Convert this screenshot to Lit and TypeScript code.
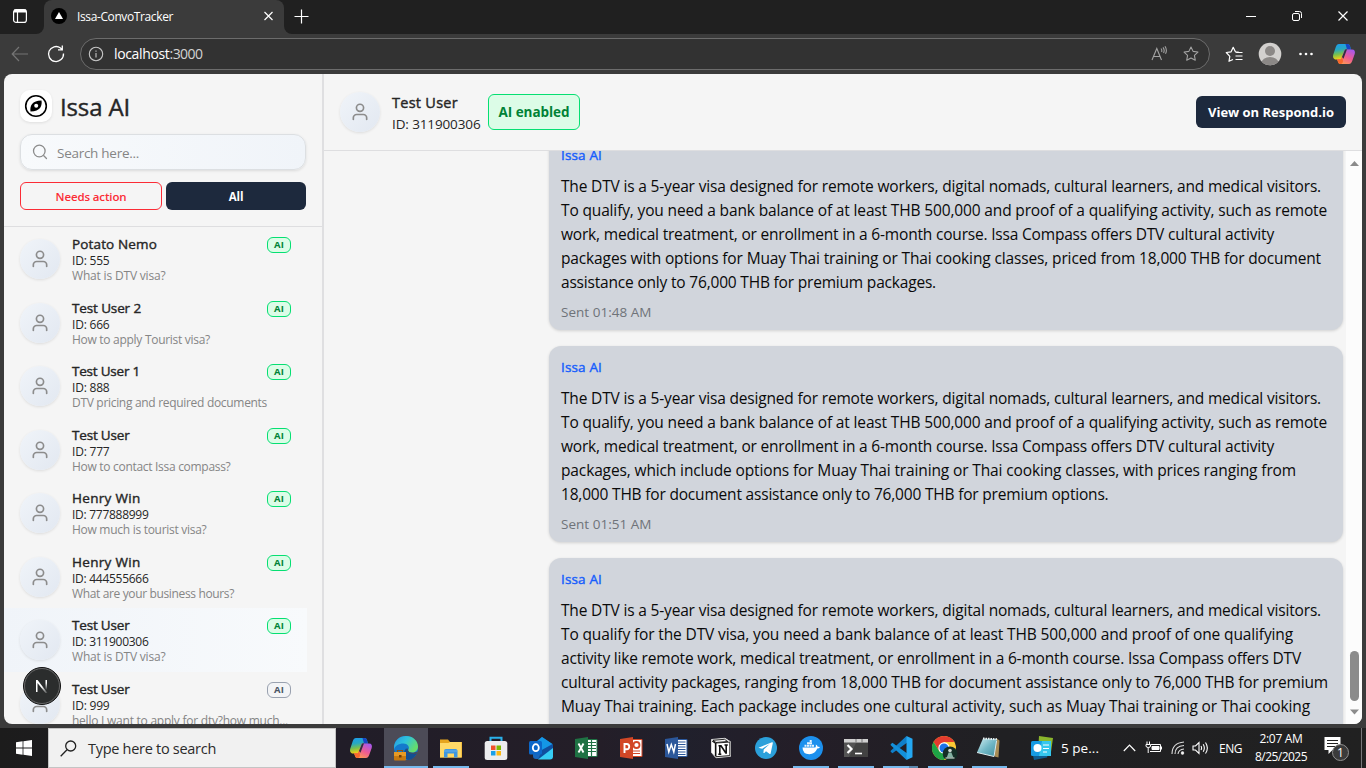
import { LitElement, html, css, nothing } from "lit";
import { customElement, property, query } from "lit/decorators.js";

/** A single line of text whose tracking is tuned to a fixed advance width. */
@customElement("fit-text")
class FitText extends LitElement {
  @property({ type: Number }) w = 0;
  @property() text = "";
  @query("span") span!: HTMLSpanElement;
  static styles = css`
    :host { display: inline-block; white-space: nowrap; }
    span { display: inline-block; white-space: pre; }
  `;
  render() { return html`<span>${this.text}</span>`; }
  updated() {
    this.span.style.letterSpacing = "0";
    const natural = this.span.getBoundingClientRect().width;
    this.span.style.letterSpacing = `${(this.w - natural) / this.text.length}px`;
  }
}

const t = (text: string, w: number, cls = "") => html`<fit-text class=${cls} .text=${text} .w=${w}></fit-text>`;

const userIcon = html`<svg width="20" height="20" viewBox="0 0 24 24" fill="none" stroke="#8c8c8c" stroke-width="2" stroke-linecap="round" stroke-linejoin="round"><circle cx="12" cy="7" r="4.3"/><path d="M20 21v-2a4 4 0 0 0-4-4H8a4 4 0 0 0-4 4v2"/></svg>`;

const copilot = html`<svg width="24" height="24" viewBox="0 0 24 24">
  <defs>
    <linearGradient id="ca" x1="0" y1="0" x2="0.2" y2="1"><stop offset="0" stop-color="#1b9cf0"/><stop offset=".4" stop-color="#28a8c0"/><stop offset=".7" stop-color="#7cc04a"/><stop offset="1" stop-color="#f3cf17"/></linearGradient>
    <linearGradient id="cb" x1=".8" y1="0" x2=".2" y2="1"><stop offset="0" stop-color="#a558ee"/><stop offset=".5" stop-color="#ef5b93"/><stop offset="1" stop-color="#ffa04d"/></linearGradient>
  </defs>
  <path d="M7 2h8.500c1.700 0 2.200 1 2.700 2.700l.8 2.800h-4.500L10 17.500H4C1.500 17.500.5 15 1.300 12.500L3.800 5C4.500 3 5.500 2 7 2z" fill="url(#ca)"/>
  <path d="M13.500 2h2c1.700 0 2.200 1 2.700 2.700l.8 2.800h-4z" fill="#1745c5"/>
  <path d="M17 22H8.500c-1.700 0-2.200-1-2.700-2.700L5 17.200h4l3.800-9.700H20c2.500 0 3.500 2 2.700 4.500L20.200 19c-.7 2-1.700 3-3.200 3z" fill="url(#cb)"/>
  <path d="M5 17.200h4l1.200-3 .8 4.500c.2 1.500-1 3.300-2.500 3.300-1.700 0-2.200-1-2.700-2.700z" fill="#f8682c"/>
  <path d="M10 15L13 7.500l2-.3-3.500 9.500z" fill="#303040"/>
</svg>`;

const star = "M10 2.200l2.350 4.900 5.350.75-3.900 3.750.95 5.300L10 14.400l-4.750 2.500.95-5.300L2.300 7.850l5.350-.75z";

const taskIcons: { id: string; w: number; on?: boolean; bar?: number; split?: boolean; art: unknown }[] = [
  { id: "copilot", w: 46, art: copilot },
  { id: "edge", w: 44, on: true, bar: 44, art: html`<svg width="26" height="26" viewBox="0 0 26 26">
    <defs><linearGradient id="eg" x1="0" y1="0" x2="1" y2=".5"><stop offset="0" stop-color="#2795e0"/><stop offset=".5" stop-color="#2ec3dd"/><stop offset="1" stop-color="#66dc6b"/></linearGradient></defs>
    <circle cx="13" cy="13" r="12" fill="#1479cc"/>
    <path d="M1 13C1 5.500 6.300 1 13 1c7 0 12 5 12 10.500 0 4-3 6-6 6-3.500 0-4.500-1.500-3.500-3 1.500-2.500-1-6-5-6C5.500 8.500 1.500 11 1 15z" fill="url(#eg)"/>
    <path d="M15 14c-1 2 1 4 4 4 2 0 3.500-.5 4.300-1L24 18c-2 4-5 7-9 7-4.500-1-5.500-8-2-11.500z" fill="#144f91"/>
    <path d="M14 13c1.500 1 .5 2 1.800 3.600 1.200 1.400 5 1.700 8.700-.2L23 19l-8-1z" fill="#4c4b57"/>
    <rect x="1" y="17" width="12" height="8.500" rx="1" fill="#c77a10"/><path d="M1 17h12v4H1z" fill="#e79a25"/><path d="M4.500 17v-1.500h5V17" fill="none" stroke="#8e5412" stroke-width="1.200"/><rect x="6" y="20" width="2.500" height="2.500" fill="#6f3d08"/>
  </svg>` },
  { id: "explorer", w: 46, bar: 36, art: html`<svg width="24" height="24" viewBox="0 0 24 24"><path d="M1 3.500h8l2 2.500h12v15.500H1z" fill="#e6a51e"/><path d="M1 7h8.500l1.500-1h11.500v15.500H1z" fill="#ffd967"/><path d="M5 21.500V15q0-2 2-2h9.500q2 0 2 2v6.500h-3.500v-4H8.500v4z" fill="#3e97e0"/><path d="M5 15h13.500" stroke="#67b2ee"/></svg>` },
  { id: "store", w: 44, art: html`<svg width="24" height="24" viewBox="0 0 24 24"><path d="M6.500 7V1.700h11V7" fill="none" stroke="#2ab1ea" stroke-width="2"/><rect x=".7" y="5" width="22.600" height="19" rx="2.500" fill="#ededef"/><path d="M7 9.500h4.500V14H7z" fill="#f0512a"/><path d="M12.500 9.500H17V14h-4.500z" fill="#7eb900"/><path d="M7 15h4.500v4.500H7z" fill="#1ba0e8"/><path d="M12.500 15H17v4.500h-4.500z" fill="#fcb813"/></svg>` },
  { id: "outlook", w: 45, art: html`<svg width="24" height="24" viewBox="0 0 24 24"><path d="M4 8l9-7 10 7v12q0 3-3 3H7q-3 0-3-3z" fill="#1768bd"/><path d="M8 5.500L13 1l10.500 7L13 14z" fill="#1497e6"/><path d="M24 8.500v12q0 3-3 3H9z" fill="#36cdf4"/><path d="M13 14l11-6v4L9 23.500z" fill="#104f9e"/><rect y="5" width="13" height="13.500" rx="1.500" fill="#0c67c8"/><ellipse cx="6.800" cy="11.700" rx="3" ry="3.500" fill="none" stroke="#fff" stroke-width="1.800"/></svg>` },
  { id: "excel", w: 45, art: html`<svg width="24" height="24" viewBox="0 0 24 24"><path d="M12 3.500h11v17H12z" fill="#fff" stroke="#1f7244" stroke-width="1"/><path d="M13 6.500h9M13 9.500h9M13 12.500h9M13 15.500h9M17.500 4v16" stroke="#1f7244" stroke-width="1.200"/><path d="M1 3L14 1v22L1 21z" fill="#1f7244"/><path d="M4.500 7.500l5 9M9.500 7.500l-5 9" stroke="#fff" stroke-width="1.900"/></svg>` },
  { id: "powerpoint", w: 45, art: html`<svg width="24" height="24" viewBox="0 0 24 24"><path d="M12 3.500h11v17H12z" fill="#fff" stroke="#d24726" stroke-width="1"/><circle cx="17.500" cy="9" r="3" fill="none" stroke="#d24726" stroke-width="1.800"/><path d="M14 15h7M14 17.500h7" stroke="#d24726" stroke-width="1.200"/><path d="M1 3L14 1v22L1 21z" fill="#d24726"/><path d="M5.500 17V8h2.300q2.400 0 2.400 2.600T7.800 13.200H5.500" fill="none" stroke="#fff" stroke-width="1.900"/></svg>` },
  { id: "word", w: 45, art: html`<svg width="24" height="24" viewBox="0 0 24 24"><path d="M12 3.500h11v17H12z" fill="#fff" stroke="#2b579a" stroke-width="1"/><path d="M13 6h8.500M13 8.500h8.500M13 11h8.500M13 13.500h8.500M13 16h8.500M13 18.500h8.500" stroke="#2b579a" stroke-width="1.100"/><path d="M1 3L14 1v22L1 21z" fill="#2b579a"/><path d="M3 8l1.800 8L7.300 8.500 9.800 16l1.700-8" fill="none" stroke="#fff" stroke-width="1.500"/></svg>` },
  { id: "notion", w: 45, art: html`<svg width="22" height="22" viewBox="0 0 22 22"><path d="M1.500 2.500L15 1.300l5.500 3.500v14.500L6 20.700 1.500 15.500z" fill="#fff" stroke="#d8d8d8" stroke-width="1"/><path d="M3 3.300L14.500 2.300l3.200 2.200L6 5.500z" fill="#f4f4f4" stroke="#111" stroke-width=".9"/><path d="M2.300 4l3.200 2.300v13" fill="none" stroke="#111" stroke-width="1.300"/><path d="M6 6l13.800-.9v13.500L6 19.700z" fill="#fff" stroke="#111" stroke-width=".9"/><path d="M8.500 8.800h2.500l5 7.500M9.800 9v8M16.200 7.800V16.800M8.300 17.200h3M14.500 8h3.300" fill="none" stroke="#111" stroke-width="1.600"/></svg>` },
  { id: "telegram", w: 45, art: html`<svg width="24" height="24" viewBox="0 0 24 24"><circle cx="12" cy="12" r="11" fill="#2ba0da"/><path d="M4.500 11.700l13.500-5.400q1-.3.800.9l-2.200 10.200q-.3 1-1.200.4l-3.400-2.500-1.700 1.600-.9.2.3-3.500 6-5.500-7.600 4.700-3-.9q-.8-.2-.6-.2z" fill="#fff"/></svg>` },
  { id: "docker", w: 45, bar: 36, art: html`<svg width="26" height="26" viewBox="0 0 26 26"><circle cx="13" cy="13" r="12" fill="#1c90ed"/><path d="M4.500 12.500h12.800q1-1 .5-3 1.700.8 1.900 2.300 1.300-.3 2.300.2-.7 1.600-2.700 1.600-2.300 5.600-8 5.600-6.600 0-6.800-6.700z" fill="#fff"/><path d="M6.500 9.700h2v2h-2zM9 9.700h2v2H9zM11.500 9.700h2v2h-2zM14 9.700h2v2h-2zM9 7.300h5v2H9zM11.700 5h2v2h-2z" fill="#e6f3fe"/></svg>` },
  { id: "terminal", w: 45, bar: 36, art: html`<svg width="26" height="24" viewBox="0 0 26 24"><rect x="1" y="3" width="24" height="18" fill="#545454"/><path d="M13 7h12v14H6z" fill="#424242"/><path d="M1 3h24v3.500H1z" fill="#d0d0d0"/><path d="M13 3v3.500M19 3v3.500" stroke="#777"/><path d="M4.500 9l4 4-4 4" fill="none" stroke="#fff" stroke-width="2.200"/><path d="M12 17.500h7" stroke="#fff" stroke-width="1.600"/></svg>` },
  { id: "vscode", w: 45, bar: 35, split: true, art: html`<svg width="26" height="26" viewBox="0 0 26 26"><path d="M18.500 1L3 15.500q-1 .8 0 1.600l1.400 1.200L20 7z" fill="#0f7fc9"/><path d="M18.500 25L3 10.500q-1-.8 0-1.600l1.400-1.200L20 19z" fill="#1390da"/><path d="M18.500 1l6 2.700v18.600l-6 2.700z" fill="#24a8f2"/></svg>` },
  { id: "chrome", w: 44, bar: 35, art: html`<svg width="26" height="26" viewBox="0 0 26 26"><circle cx="12" cy="13" r="12" fill="#fcc934"/><path d="M1.600 7A12 12 0 0 1 22.400 7H12L7 15.500z" fill="#e33b2e"/><path d="M1.600 7A12 12 0 0 0 12 25l5-9-9.500.5z" fill="#1ea446"/><circle cx="12" cy="13" r="5.700" fill="#fff"/><circle cx="12" cy="13" r="4.500" fill="#1b73e8"/><circle cx="18" cy="18.700" r="7.300" fill="#142e26"/><circle cx="18" cy="15.500" r="1.800" fill="#cfd9d3"/><path d="M14.800 22.500l1.800-5h2.800l2 5z" fill="#83b2a2"/><path d="M13.500 23h9" stroke="#e5eee8"/></svg>` },
  { id: "notepad", w: 44, bar: 35, art: html`<svg width="26" height="26" viewBox="0 0 26 26"><defs><linearGradient id="np" x1="0" y1="0" x2="1" y2="1"><stop offset="0" stop-color="#d3eff2"/><stop offset=".5" stop-color="#72b8c6"/><stop offset="1" stop-color="#3f8e9f"/></linearGradient></defs><path d="M20 3l3.500 2.500-1 17-4-1z" fill="#a88c55"/><path d="M7 3.500L21 4l-3 17.500L1 17.500z" fill="url(#np)"/><path d="M7 3.500l14 .8" stroke="#e9eff0" stroke-width="2" stroke-dasharray="1.500 1"/><path d="M1 17.500l17 4L20.500 6" fill="none" stroke="#dcebed"/></svg>` },
];

interface Person { name: string; nw: number; id: string; iw: number; msg: string; mw: number; ai: boolean; sel?: boolean }
const people: Person[] = [
  { name: "Potato Nemo", nw: 85, id: "ID: 555", iw: 37.5, msg: "What is DTV visa?", mw: 93.5, ai: true },
  { name: "Test User 2", nw: 69, id: "ID: 666", iw: 37.5, msg: "How to apply Tourist visa?", mw: 138, ai: true },
  { name: "Test User 1", nw: 68, id: "ID: 888", iw: 37.5, msg: "DTV pricing and required documents", mw: 195, ai: true },
  { name: "Test User", nw: 57.5, id: "ID: 777", iw: 37.5, msg: "How to contact Issa compass?", mw: 158.5, ai: true },
  { name: "Henry Win", nw: 68.5, id: "ID: 777888999", iw: 76.5, msg: "How much is tourist visa?", mw: 134.5, ai: true },
  { name: "Henry Win", nw: 68.5, id: "ID: 444555666", iw: 76.5, msg: "What are your business hours?", mw: 162, ai: true },
  { name: "Test User", nw: 57.5, id: "ID: 311900306", iw: 76.5, msg: "What is DTV visa?", mw: 93.5, ai: true, sel: true },
  { name: "Test User", nw: 57.5, id: "ID: 999", iw: 37.5, msg: "hello I want to apply for dtv?how much...", mw: 216, ai: false },
];

const messages: { lines: [string, number][]; sent?: string }[] = [
  { lines: [
    ["The DTV is a 5-year visa designed for remote workers, digital nomads, cultural learners, and medical visitors.", 760],
    ["To qualify, you need a bank balance of at least THB 500,000 and proof of a qualifying activity, such as remote", 766],
    ["work, medical treatment, or enrollment in a 6-month course. Issa Compass offers DTV cultural activity", 713],
    ["packages with options for Muay Thai training or Thai cooking classes, priced from 18,000 THB for document", 760],
    ["assistance only to 76,000 THB for premium packages.", 375],
  ], sent: "Sent 01:48 AM" },
  { lines: [
    ["The DTV is a 5-year visa designed for remote workers, digital nomads, cultural learners, and medical visitors.", 760],
    ["To qualify, you need a bank balance of at least THB 500,000 and proof of a qualifying activity, such as remote", 766],
    ["work, medical treatment, or enrollment in a 6-month course. Issa Compass offers DTV cultural activity", 713],
    ["packages, which include options for Muay Thai training or Thai cooking classes, with prices ranging from", 735],
    ["18,000 THB for document assistance only to 76,000 THB for premium options.", 547.5],
  ], sent: "Sent 01:51 AM" },
  { lines: [
    ["The DTV is a 5-year visa designed for remote workers, digital nomads, cultural learners, and medical visitors.", 760],
    ["To qualify for the DTV visa, you need a bank balance of at least THB 500,000 and proof of one qualifying", 732],
    ["activity like remote work, medical treatment, or enrollment in a 6-month course. Issa Compass offers DTV", 740],
    ["cultural activity packages, ranging from 18,000 THB for document assistance only to 76,000 THB for premium", 767],
    ["Muay Thai training. Each package includes one cultural activity, such as Muay Thai training or Thai cooking", 749],
  ] },
];

@customElement("app-root")
class AppRoot extends LitElement {
  static styles = css`
    :host { display: flex; flex-direction: column; width: 1366px; height: 768px; overflow: hidden; background: #3b3b3b; font-family: "Open Sans", sans-serif; color: #262626; }
    * { box-sizing: border-box; }
    svg { display: block; flex: none; }
    .tabs { height: 34px; background: #202020; display: flex; align-items: center; color: #fff; font-size: 12px; flex: none; }
    .tabs .menu { width: 44px; height: 34px; padding: 8px 0 0 12px; border-radius: 0 0 8px 0; background: #202020; }
    .strip { display: flex; background: #3b3b3b; height: 34px; }
    .tab { width: 240px; height: 34px; background: #3b3b3b; border-radius: 8px 8px 0 0; display: flex; align-items: center; padding: 0 9px 2px 7px; gap: 10px; }
    .tab .x { margin-left: auto; }
    .newtab { flex: 1; height: 34px; background: #202020; border-radius: 0 0 0 8px; display: flex; align-items: center; padding: 0 17px 2px 10px; }
    .corner { background: linear-gradient(to bottom, #202020 50%, #3b3b3b 50%); flex: 1; display: flex; }
    .corner.left { flex: none; }
    .controls { margin-left: auto; display: flex; gap: 34px; align-items: center; }
    .bar { height: 40px; display: flex; align-items: center; padding: 0 10px 0 11px; flex: none; }
    .reload { margin-left: 17px; }
    .url { height: 32px; width: 1130px; margin-left: 14px; border: 1px solid #6c6c6c; border-radius: 16px; background: #323232; display: flex; align-items: center; padding: 0 9px 0 7px; color: #fff; font-size: 14px; }
    .url fit-text { margin: -1px 0 0 10px; }
    .port { color: #d2d2d2; }
    .url .port { margin-left: 0; }
    .url .read { margin-left: auto; margin-right: 14px; }
    .tools { display: flex; align-items: center; gap: 13px; margin-left: 14px; }
    .favs { margin-right: 1px; }
    .dots { margin: 0 2px; }
    .page { height: 650px; width: 1358px; margin: 0 4px; border-radius: 8px; overflow: hidden; background: #f5f5f5; display: flex; flex: none; }
    .side { width: 320px; border-right: 2px solid #dfdfe1; display: flex; flex-direction: column; flex: none; overflow: hidden; }
    .head { height: 153px; border-bottom: 1px solid #dedee0; padding: 16px 16px 0; flex: none; }
    .brand { display: flex; align-items: center; gap: 8px; height: 32px; font-size: 24px; line-height: 32px; }
    .brand fit-text { padding-top: 2px; -webkit-text-stroke: 0.400px; }
    .logo { width: 32px; height: 32px; border-radius: 10px; background: #fff; box-shadow: 0 1px 3px #00000018; display: grid; place-items: center; }
    .search { margin-top: 12px; width: 286px; height: 36px; border-radius: 12px; border: 1px solid #dcdfe2; background: linear-gradient(90deg, #f8fafc, #f0f4f9); box-shadow: 0 1px 3px #0000001c; display: flex; align-items: center; padding: 0 11px; gap: 9px; font-size: 13.500px; color: #858585; }
    .search fit-text { padding-top: 1px; }
    .filters { display: flex; gap: 4px; margin-top: 12px; font-size: 11.500px; font-weight: 600; }
    .filters div { height: 28px; border-radius: 6px; display: grid; place-items: center; padding-top: 1px; }
    .need { width: 142px; border: 1px solid #fb2c36; color: #fb2c36; }
    .all { width: 140px; background: #1d293d; color: #fff; font-weight: 700; }
    .row { height: 63.500px; width: 303px; display: flex; padding: 0 16px; flex: none; }
    .row.sel { background: linear-gradient(90deg, #f0f4f9, #f8fafc); }
    .ava { width: 40px; height: 40px; border-radius: 50%; background: linear-gradient(135deg, #f0f4f9, #e2e8f1); box-shadow: 0 1px 3px #0000001a; display: grid; place-items: center; flex: none; }
    .row .ava { margin-top: 12px; }
    .info { margin-left: 12px; width: 195px; flex: none; display: flex; flex-direction: column; padding-top: 7px; }
    .name { font-size: 13.500px; line-height: 21px; height: 19px; -webkit-text-stroke: 0.400px; }
    .uid { font-size: 12px; line-height: 15px; height: 15px; }
    .msg { font-size: 12px; line-height: 16px; height: 16px; color: #858585; }
    .pill { width: 24px; height: 16px; border-radius: 6px; border: 1px solid #05df72; background: #dcfce7; color: #008236; font-size: 9.500px; font-weight: 700; display: grid; place-items: center; line-height: 14px; margin-top: 10px; flex: none; }
    .pill.off { border-color: #99a1af; background: #f3f4f6; color: #4a5565; }
    .badge { position: absolute; left: 22px; top: 666px; }
    .main { flex: 1; display: flex; flex-direction: column; min-width: 0; }
    .top { height: 77px; border-bottom: 1px solid #dedee0; display: flex; align-items: center; padding: 0 16px; flex: none; }
    .who { margin-left: 12px; display: flex; flex-direction: column; width: 88px; padding-top: 3px; }
    .who .n { font-size: 14.500px; line-height: 20px; height: 20px; -webkit-text-stroke: 0.400px; }
    .who .i { font-size: 13.500px; line-height: 22px; height: 22px; }
    .enabled { margin-left: 8px; width: 92px; height: 36px; border: 1px solid #05df72; border-radius: 6px; background: #dcfce7; color: #008236; font-size: 13.500px; font-weight: 700; display: grid; place-items: center; }
    .view { margin-left: auto; width: 150px; height: 32px; border-radius: 6px; background: #1d293d; color: #fff; font-size: 13px; font-weight: 700; display: grid; place-items: center; }
    .body { flex: 1; display: flex; min-height: 0; }
    .chat { flex: 1; overflow: hidden; display: flex; flex-direction: column; align-items: flex-end; gap: 16px; padding-right: 3px; }
    .scrolled { margin-top: -17px; }
    .bubble { width: 794px; border-radius: 12px; background: #d1d5dc; box-shadow: 0 1px 3px #00000026; padding: 11px 12px 8px; flex: none; }
    .from { font-size: 13.500px; -webkit-text-stroke: 0.400px; color: #155dfc; line-height: 20px; height: 20px; }
    .lines { margin-top: 9px; font-size: 15.500px; line-height: 24px; color: #0a0a0a; }
    .lines div { height: 24px; }
    .sent { margin-top: 8px; height: 20px; font-size: 13.500px; line-height: 20px; color: #6f7379; }
    .scroll { width: 16px; background: #fcfcfc; display: flex; flex-direction: column; align-items: center; flex: none; padding: 8px 0 9px 1px; }
    .thumb { width: 9px; height: 50px; border-radius: 5px; background: #8b8b8b; margin-top: auto; margin-bottom: 8px; }
    .task { height: 40px; margin-top: 4px; background: linear-gradient(90deg, #1c1c1c 0, #211d28 340px, #241e28 600px, #20202c 680px, #241e28 800px, #202023 1000px, #212121 1366px); display: flex; flex: none; color: #fff; }
    .start { width: 48px; display: grid; place-items: center; }
    .find { width: 288px; background: #f1f1f1; border: 1px solid #c4c4c4; display: flex; align-items: center; gap: 11px; padding-left: 11px; color: #2b2b2b; font-size: 14.500px; }
    .apps { display: flex; margin-left: 2px; }
    .app { height: 40px; display: flex; flex-direction: column; align-items: center; justify-content: space-between; }
    .app .art { height: 38px; display: grid; place-items: center; padding-top: 2px; }
    .app.on { background: #4c4b57; }
    .line { height: 2px; background: #76b9ed; }
    .line.split { background: linear-gradient(90deg, #76b9ed 26px, #5a88ae 26px); }
    .tray { margin-left: auto; display: flex; align-items: center; }
    .news { font-size: 13.500px; margin-left: 7px; }
    .tray .up { margin-left: 24px; }
    .tray .bat { margin-left: 9px; }
    .tray .wifi { margin-left: 9px; }
    .tray .vol { margin-left: 7px; }
    .eng { font-size: 12px; margin-left: 10px; }
    .clock { display: flex; flex-direction: column; align-items: center; width: 54px; margin-left: 12px; font-size: 12px; line-height: 18px; }
    .clock fit-text { height: 18px; }
    .note { margin-left: 16px; }
    .peek { width: 1px; height: 40px; background: #77777a; margin: 0 4px 0 11px; }
  `;

  render() {
    return html`
      <div class="tabs">
        <div class="corner left"><div class="menu">
          <svg width="16" height="16" viewBox="0 0 16 16" fill="none" stroke="#fff" stroke-width="1.200"><rect x="1.600" y="1.600" width="12.800" height="12.800" rx="2.500"/><path d="M2 3h12" stroke-width="3"/><path d="M5.500 4v10"/></svg>
        </div></div>
        <div class="strip"><div class="corner"><div class="tab">
          <svg width="16" height="16" viewBox="0 0 16 16"><circle cx="8" cy="8" r="8" fill="#000"/><path d="M8 4l4 7H4z" fill="#fff"/></svg>
          ${t("Issa-ConvoTracker", 96)}
          <svg class="x" width="12" height="12" viewBox="0 0 12 12" stroke="#fff" stroke-width="1.200"><path d="M1.500 2l8 8M9.500 2l-8 8"/></svg>
        </div></div></div>
        <div class="corner"><div class="newtab">
          <svg width="15" height="15" viewBox="0 0 15 15" stroke="#fff" stroke-width="1.200"><path d="M7.500 .5v14M.5 7.500h14"/></svg>
          <div class="controls">
            <svg width="12" height="12" viewBox="0 0 12 12"><path d="M1 6.500h10" stroke="#fff"/></svg>
            <svg width="12" height="12" viewBox="0 0 12 12" fill="none" stroke="#fff"><rect x="1.500" y="3.500" width="7" height="7" rx="1.500"/><path d="M4 1.500h4.500a2 2 0 0 1 2 2V8"/></svg>
            <svg width="12" height="12" viewBox="0 0 12 12" stroke="#fff" stroke-width="1.200"><path d="M1.500 1.500l9 9M10.500 1.500l-9 9"/></svg>
          </div>
        </div></div>
      </div>
      <div class="bar">
        <svg width="18" height="18" viewBox="0 0 18 18" fill="none" stroke="#757575" stroke-width="1.200"><path d="M17 9H1.500M8 2L1.200 9 8 16"/></svg>
        <svg class="reload" width="20" height="20" viewBox="0 0 20 20" fill="none" stroke="#fff" stroke-width="1.300"><path d="M17.500 9.500A7.500 7.500 0 1 1 14.500 4l1.500 1.500M16.300 1.500v4.300H12"/></svg>
        <div class="url">
          <svg width="16" height="16" viewBox="0 0 16 16" fill="none" stroke="#c6c6c6" stroke-width="1.100"><circle cx="8" cy="8" r="6.700"/><path d="M8 7v4.500M8 4.500v1.300"/></svg>
          ${t("localhost", 55.5)}${t(":3000", 33, "port")}
          <svg class="read" width="18" height="18" viewBox="0 0 18 18" fill="none" stroke="#a3a3a3" stroke-width="1.100"><path d="M2 15L6.800 3.500 11.500 15M3.600 11.500h6.400M11 3.500q1.300 1.500.6 3.500M13 2.300q2 2.700.6 5.700M15 1.200q2.500 3.800.5 7.500"/></svg>
          <svg width="18" height="18" viewBox="0 0 20 20" fill="none" stroke="#a3a3a3" stroke-width="1.200" stroke-linejoin="round"><path d=${star}/></svg>
        </div>
        <div class="tools">
          <svg class="favs" width="20" height="20" viewBox="0 0 20 20" fill="none" stroke="#fff" stroke-width="1.200" stroke-linejoin="round"><path d="M9 15.500L5 17.300l.8-5L2.300 8.500l4.800-.7L9.200 3.300l2.200 4.500 3.600.5M12 8.500h6.500M11.500 12h7M11.500 15.500h7"/></svg>
          <svg width="24" height="24" viewBox="0 0 24 24"><defs><clipPath id="uc"><circle cx="12" cy="12" r="11.300"/></clipPath></defs><circle cx="12" cy="12" r="11.300" fill="#d2d0ce"/><g clip-path="url(#uc)" fill="#8b8886"><circle cx="12" cy="9" r="5"/><ellipse cx="12" cy="21" rx="8.500" ry="6"/></g></svg>
          <svg class="dots" width="20" height="20" viewBox="0 0 20 20" fill="#fff"><circle cx="3.500" cy="10" r="1.300"/><circle cx="9" cy="10" r="1.300"/><circle cx="14.500" cy="10" r="1.300"/></svg>
          ${copilot}
        </div>
      </div>
      <div class="page">
        <div class="side">
          <div class="head">
            <div class="brand"><div class="logo"><svg width="24" height="24" viewBox="0 0 24 24"><circle cx="12" cy="12" r="10.300" fill="none" stroke="#000" stroke-width="1.600"/><path d="M17.500 6.500c.8 5-1 11-11 11C5.700 12 8 6.500 17.500 6.500z" fill="#000"/><circle cx="12.200" cy="11.800" r="2" fill="#fff"/></svg></div>${t("Issa AI", 70)}</div>
            <div class="search"><svg width="16" height="16" viewBox="0 0 16 16" fill="none" stroke="#8c8c8c" stroke-width="1.300" stroke-linecap="round"><circle cx="7.300" cy="7" r="5.800"/><path d="M11.800 11.800l2.700 2.700"/></svg>${t("Search here...", 82)}</div>
            <div class="filters"><div class="need">${t("Needs action", 71)}</div><div class="all">${t("All", 14.5)}</div></div>
          </div>
          ${people.map((p) => html`<div class=${p.sel ? "row sel" : "row"}>
            <div class="ava">${userIcon}</div>
            <div class="info">${t(p.name, p.nw, "name")}${t(p.id, p.iw, "uid")}${t(p.msg, p.mw, "msg")}</div>
            <div class=${p.ai ? "pill" : "pill off"}>${t("AI", 10)}</div>
          </div>`)}
        </div>
        <div class="main">
          <div class="top">
            <div class="ava">${userIcon}</div>
            <div class="who">${t("Test User", 66, "n")}${t("ID: 311900306", 88.5, "i")}</div>
            <div class="enabled">${t("AI enabled", 71)}</div>
            <div class="view">${t("View on Respond.io", 126)}</div>
          </div>
          <div class="body">
            <div class="chat">
              ${messages.map((m, i) => html`<div class=${i ? "bubble" : "bubble scrolled"}>
                <div class="from">${t("Issa AI", 41)}</div>
                <div class="lines">${m.lines.map(([s, w]) => html`<div>${t(s, w)}</div>`)}</div>
                ${m.sent ? html`<div class="sent">${t(m.sent, 90.5)}</div>` : html`<div class="sent"></div>`}
              </div>`)}
            </div>
            <div class="scroll">
              <svg width="9" height="8" viewBox="0 0 9 8" fill="#8b8b8b"><path d="M4.500 2L9 7H0z"/></svg>
              <div class="thumb"></div>
              <svg width="9" height="6" viewBox="0 0 9 6" fill="#8b8b8b"><path d="M4.500 5.500L9 .5H0z"/></svg>
            </div>
          </div>
        </div>
      </div>
      <div class="task">
        <div class="start"><svg width="16" height="16" viewBox="0 0 16 16" fill="#fff"><path d="M0 2.200L6.600 1.300v6.300H0zM7.400 1.200L16 0v7.600H7.400zM0 8.400h6.600v6.300L0 13.800zM7.400 8.400H16V16l-8.600-1.200z"/></svg></div>
        <div class="find"><svg width="17" height="17" viewBox="0 0 17 17" fill="none" stroke="#222" stroke-width="1.300"><circle cx="10.700" cy="6" r="5"/><path d="M7 9.800L.7 16.200"/></svg>${t("Type here to search", 128)}</div>
        <div class="apps">${taskIcons.map((a) => html`<div class=${a.on ? "app on" : "app"} style="width:${a.w}px"><div class="art">${a.art}</div>${a.bar ? html`<div class=${a.split ? "line split" : "line"} style="width:${a.bar}px"></div>` : nothing}</div>`)}</div>
        <div class="tray">
          <svg width="24" height="24" viewBox="0 0 24 24"><path d="M9 0l14 2-2 14H8z" fill="#8bb62c"/><path d="M2 15h17l-2 6.500L4 24z" fill="#0e5d91"/><rect x="1" y="5" width="20" height="15" rx="1.500" fill="#179be3"/><path d="M12 5h9v15H9z" fill="#35c7ee"/><circle cx="7.500" cy="12" r="4" fill="#fff"/><path d="M13 9h6M13 12.500h6M13 16h4" stroke="#fff" stroke-width="1.200"/></svg>
          ${t("5 pe...", 38, "news")}
          <svg class="up" width="13" height="8" viewBox="0 0 13 8" fill="none" stroke="#fff" stroke-width="1.200"><path d="M.8 7L6.500 1.200 12.200 7"/></svg>
          <svg class="bat" width="17" height="14" viewBox="0 0 17 14" fill="none" stroke="#fff"><path d="M6 3.500h9.500v7H5M16.500 5.500v3M2 .5v3M4.500 .5v3M1 3.500h4.500v1.500q0 1.500-2.200 1.500T1 5zM3.200 6.500V12"/><path d="M7 5.500h7v3H7z" fill="#fff"/></svg>
          <svg class="wifi" width="14" height="14" viewBox="0 0 14 14" fill="none" stroke="#ddd" stroke-width="1.100"><path d="M1 13Q1 2 13 1M4 13q0-8 9-8.500M7 13q.5-4.500 6-5"/><circle cx="11.500" cy="12" r="1.200" fill="#fff"/></svg>
          <svg class="vol" width="17" height="14" viewBox="0 0 17 14" fill="none" stroke="#fff" stroke-width="1.100"><path d="M1 5h2.500L7 1.500v11L3.500 9H1zM9 5q1.200 2 0 4M11.200 3.300q2.300 3.700 0 7.400M13.500 1.500q3.700 5.500 0 11"/></svg>
          ${t("ENG", 23, "eng")}
          <div class="clock">${t("2:07 AM", 43)}${t("8/25/2025", 52)}</div>
          <svg class="note" width="26" height="26" viewBox="0 0 26 26"><path d="M.5 2h16v13h-8l-4 4v-4h-4z" fill="#fff"/><path d="M3 5.500h11M3 8.500h11M3 11.500h8" stroke="#222"/><circle cx="16.500" cy="17.500" r="8" fill="#3b3b3b" stroke="#909090"/><text x="16.500" y="21.800" font-size="12" text-anchor="middle" fill="#fff">1</text></svg>
          <div class="peek"></div>
        </div>
      </div>
      <div class="badge"><svg width="40" height="40" viewBox="0 0 40 40"><circle cx="20" cy="20" r="18.500" fill="#2b2d2d" stroke="#111" stroke-width="1"/><circle cx="20" cy="20" r="17.500" fill="none" stroke="#666"/><defs><linearGradient id="ng" x1="0" y1="0" x2="1" y2="1"><stop offset=".5" stop-color="#fff"/><stop offset="1" stop-color="#fff" stop-opacity=".1"/></linearGradient><linearGradient id="nv" x1="0" y1="0" x2="0" y2="1"><stop offset=".3" stop-color="#fff"/><stop offset="1" stop-color="#fff" stop-opacity="0"/></linearGradient></defs><path d="M14 26V14h1.600L25.500 27h-2L15.500 17v9z" fill="url(#ng)"/><path d="M23.500 14H25v10h-1.500z" fill="url(#nv)"/></svg></div>
    `;
  }
}
